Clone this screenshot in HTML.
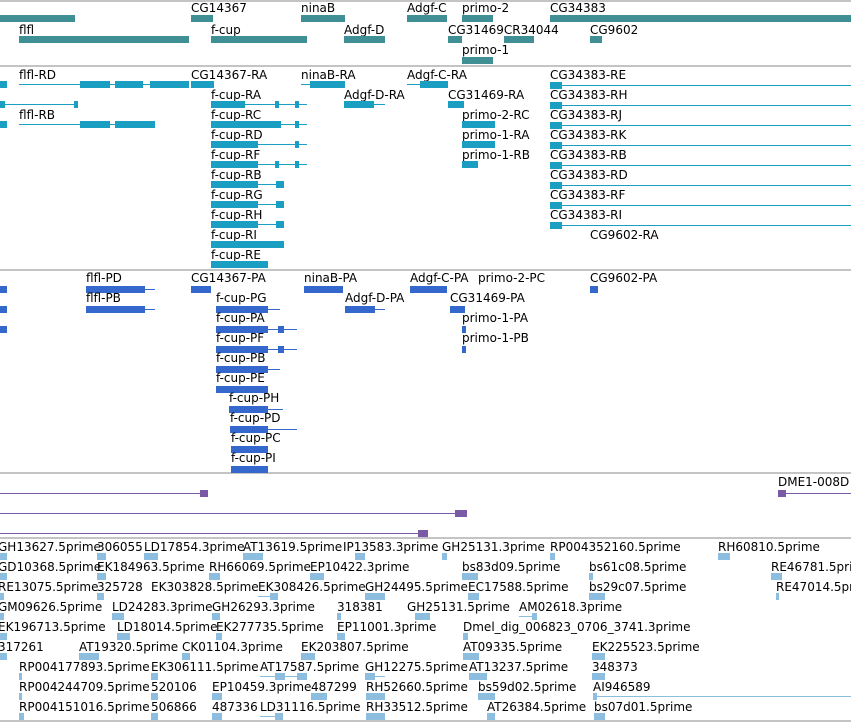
<!DOCTYPE html>
<html><head><meta charset="utf-8"><style>
body{margin:0;width:851px;height:722px;overflow:hidden;background:#fff;position:relative;font-family:"DejaVu Sans","Liberation Sans",sans-serif}
.t{position:absolute;font-size:12px;line-height:14px;white-space:nowrap;color:#000}
.h{position:absolute;left:0;width:851px;height:2px;background:#c4c4c4}
.b{position:absolute;height:7px}
.l{position:absolute;height:1px}
.g{background:#3f8f94}.c{background:#1a9ec2}.p{background:#3468cc}.v{background:#7a5aa6}.e{background:#8dbee0}
</style></head><body>
<div class="h" style="top:0"></div><div class="h" style="top:65px"></div><div class="h" style="top:269px"></div><div class="h" style="top:472px"></div><div class="h" style="top:537px"></div><div class="h" style="top:720px"></div>

<!-- track 1 genes -->
<div class="t" style="left:191px;top:1px">CG14367</div><div class="t" style="left:301px;top:1px">ninaB</div><div class="t" style="left:407px;top:1px">Adgf-C</div><div class="t" style="left:462px;top:1px">primo-2</div><div class="t" style="left:550px;top:1px">CG34383</div>
<div class="b g" style="left:0;width:75px;top:15px"></div><div class="b g" style="left:191px;width:22px;top:15px"></div><div class="b g" style="left:301px;width:44px;top:15px"></div><div class="b g" style="left:407px;width:40px;top:15px"></div><div class="b g" style="left:462px;width:31px;top:15px"></div><div class="b g" style="left:550px;width:301px;top:15px"></div>
<div class="t" style="left:19px;top:23px">flfl</div><div class="t" style="left:211px;top:23px">f-cup</div><div class="t" style="left:344px;top:23px">Adgf-D</div><div class="t" style="left:448px;top:23px">CG31469CR34044</div><div class="t" style="left:590px;top:23px">CG9602</div>
<div class="b g" style="left:19px;width:170px;top:36px"></div><div class="b g" style="left:211px;width:96px;top:36px"></div><div class="b g" style="left:344px;width:41px;top:36px"></div><div class="b g" style="left:448px;width:14px;top:36px"></div><div class="b g" style="left:504px;width:30px;top:36px"></div><div class="b g" style="left:590px;width:12px;top:36px"></div>
<div class="t" style="left:462px;top:43px">primo-1</div><div class="b g" style="left:462px;width:31px;top:57px"></div>

<!-- track 2 transcripts -->
<div class="t" style="left:19px;top:68px">flfl-RD</div><div class="t" style="left:191px;top:68px">CG14367-RA</div><div class="t" style="left:301px;top:68px">ninaB-RA</div><div class="t" style="left:407px;top:68px">Adgf-C-RA</div>
<div class="b c" style="left:0;width:7px;top:81px"></div><div class="l c" style="left:19px;width:170px;top:84px"></div><div class="b c" style="left:80px;width:30px;top:81px"></div><div class="b c" style="left:115px;width:28px;top:81px"></div><div class="b c" style="left:150px;width:39px;top:81px"></div><div class="b c" style="left:191px;width:23px;top:81px"></div><div class="l c" style="left:301px;width:44px;top:84px"></div><div class="b c" style="left:310px;width:35px;top:81px"></div><div class="l c" style="left:407px;width:41px;top:84px"></div><div class="b c" style="left:420px;width:28px;top:81px"></div>
<div class="b c" style="left:0;width:5px;top:101px"></div><div class="l c" style="left:0;width:78px;top:104px"></div><div class="b c" style="left:74px;width:4px;top:101px"></div>
<div class="t" style="left:211px;top:88px">f-cup-RA</div><div class="t" style="left:344px;top:88px">Adgf-D-RA</div><div class="t" style="left:448px;top:88px">CG31469-RA</div>
<div class="l c" style="left:211px;width:96px;top:104px"></div><div class="b c" style="left:211px;width:34px;top:101px"></div><div class="b c" style="left:275px;width:4px;top:101px"></div><div class="b c" style="left:295px;width:4px;top:101px"></div><div class="l c" style="left:344px;width:41px;top:104px"></div><div class="b c" style="left:344px;width:30px;top:101px"></div><div class="b c" style="left:448px;width:16px;top:101px"></div>
<div class="t" style="left:19px;top:108px">flfl-RB</div><div class="t" style="left:211px;top:108px">f-cup-RC</div><div class="t" style="left:462px;top:108px">primo-2-RC</div>
<div class="b c" style="left:0;width:7px;top:121px"></div><div class="l c" style="left:19px;width:136px;top:124px"></div><div class="b c" style="left:80px;width:30px;top:121px"></div><div class="b c" style="left:115px;width:40px;top:121px"></div><div class="l c" style="left:211px;width:96px;top:124px"></div><div class="b c" style="left:211px;width:70px;top:121px"></div><div class="b c" style="left:295px;width:4px;top:121px"></div><div class="b c" style="left:462px;width:33px;top:121px"></div>
<div class="t" style="left:211px;top:128px">f-cup-RD</div><div class="t" style="left:462px;top:128px">primo-1-RA</div>
<div class="l c" style="left:211px;width:96px;top:144px"></div><div class="b c" style="left:211px;width:47px;top:141px"></div><div class="b c" style="left:295px;width:4px;top:141px"></div><div class="b c" style="left:462px;width:33px;top:141px"></div>
<div class="t" style="left:211px;top:148px">f-cup-RF</div><div class="t" style="left:462px;top:148px">primo-1-RB</div>
<div class="l c" style="left:211px;width:96px;top:164px"></div><div class="b c" style="left:211px;width:47px;top:161px"></div><div class="b c" style="left:275px;width:4px;top:161px"></div><div class="b c" style="left:295px;width:4px;top:161px"></div><div class="b c" style="left:462px;width:16px;top:161px"></div>
<div class="t" style="left:211px;top:168px">f-cup-RB</div><div class="l c" style="left:211px;width:73px;top:184px"></div><div class="b c" style="left:211px;width:47px;top:181px"></div><div class="b c" style="left:276px;width:8px;top:181px"></div>
<div class="t" style="left:211px;top:188px">f-cup-RG</div><div class="l c" style="left:211px;width:73px;top:204px"></div><div class="b c" style="left:211px;width:47px;top:201px"></div><div class="b c" style="left:276px;width:8px;top:201px"></div>
<div class="t" style="left:211px;top:208px">f-cup-RH</div><div class="l c" style="left:211px;width:73px;top:224px"></div><div class="b c" style="left:211px;width:47px;top:221px"></div><div class="b c" style="left:276px;width:8px;top:221px"></div>
<div class="t" style="left:211px;top:228px">f-cup-RI</div><div class="b c" style="left:211px;width:73px;top:241px"></div>
<div class="t" style="left:211px;top:248px">f-cup-RE</div><div class="b c" style="left:211px;width:57px;top:261px"></div>
<div class="t" style="left:550px;top:68px">CG34383-RE</div><div class="t" style="left:550px;top:88px">CG34383-RH</div><div class="t" style="left:550px;top:108px">CG34383-RJ</div><div class="t" style="left:550px;top:128px">CG34383-RK</div><div class="t" style="left:550px;top:148px">CG34383-RB</div><div class="t" style="left:550px;top:168px">CG34383-RD</div><div class="t" style="left:550px;top:188px">CG34383-RF</div><div class="t" style="left:550px;top:208px">CG34383-RI</div><div class="t" style="left:590px;top:228px">CG9602-RA</div>
<div class="l c" style="left:550px;width:301px;top:85px"></div><div class="b c" style="left:550px;width:12px;top:82px"></div>
<div class="l c" style="left:550px;width:301px;top:105px"></div><div class="b c" style="left:550px;width:12px;top:102px"></div>
<div class="l c" style="left:550px;width:301px;top:125px"></div><div class="b c" style="left:550px;width:12px;top:122px"></div>
<div class="l c" style="left:550px;width:301px;top:145px"></div><div class="b c" style="left:550px;width:12px;top:142px"></div>
<div class="l c" style="left:550px;width:301px;top:165px"></div><div class="b c" style="left:550px;width:12px;top:162px"></div>
<div class="l c" style="left:550px;width:301px;top:185px"></div><div class="b c" style="left:550px;width:12px;top:182px"></div>
<div class="l c" style="left:550px;width:301px;top:205px"></div><div class="b c" style="left:550px;width:12px;top:202px"></div>
<div class="l c" style="left:550px;width:301px;top:225px"></div><div class="b c" style="left:550px;width:12px;top:222px"></div>

<!-- track 3 proteins -->
<div class="t" style="left:86px;top:271px">flfl-PD</div><div class="t" style="left:191px;top:271px">CG14367-PA</div><div class="t" style="left:304px;top:271px">ninaB-PA</div><div class="t" style="left:410px;top:271px">Adgf-C-PA</div><div class="t" style="left:478px;top:271px">primo-2-PC</div><div class="t" style="left:590px;top:271px">CG9602-PA</div>
<div class="b p" style="left:0;width:7px;top:286px"></div><div class="l p" style="left:86px;width:69px;top:289px"></div><div class="b p" style="left:86px;width:59px;top:286px"></div><div class="b p" style="left:191px;width:20px;top:286px"></div><div class="b p" style="left:304px;width:39px;top:286px"></div><div class="b p" style="left:410px;width:37px;top:286px"></div><div class="b p" style="left:590px;width:8px;top:286px"></div>
<div class="t" style="left:86px;top:291px">flfl-PB</div><div class="t" style="left:216px;top:291px">f-cup-PG</div><div class="t" style="left:345px;top:291px">Adgf-D-PA</div><div class="t" style="left:450px;top:291px">CG31469-PA</div>
<div class="b p" style="left:0;width:7px;top:306px"></div><div class="l p" style="left:86px;width:69px;top:309px"></div><div class="b p" style="left:86px;width:59px;top:306px"></div><div class="l p" style="left:216px;width:64px;top:309px"></div><div class="b p" style="left:216px;width:52px;top:306px"></div><div class="l p" style="left:345px;width:40px;top:309px"></div><div class="b p" style="left:345px;width:30px;top:306px"></div><div class="b p" style="left:450px;width:15px;top:306px"></div>
<div class="t" style="left:216px;top:311px">f-cup-PA</div><div class="t" style="left:462px;top:311px">primo-1-PA</div>
<div class="b p" style="left:0;width:7px;top:326px"></div><div class="l p" style="left:216px;width:81px;top:329px"></div><div class="b p" style="left:216px;width:52px;top:326px"></div><div class="b p" style="left:278px;width:6px;top:326px"></div><div class="b p" style="left:462px;width:4px;top:326px"></div>
<div class="t" style="left:216px;top:331px">f-cup-PF</div><div class="t" style="left:462px;top:331px">primo-1-PB</div>
<div class="l p" style="left:216px;width:81px;top:349px"></div><div class="b p" style="left:216px;width:52px;top:346px"></div><div class="b p" style="left:278px;width:6px;top:346px"></div><div class="b p" style="left:462px;width:4px;top:346px"></div>
<div class="t" style="left:216px;top:351px">f-cup-PB</div><div class="l p" style="left:216px;width:64px;top:369px"></div><div class="b p" style="left:216px;width:52px;top:366px"></div>
<div class="t" style="left:216px;top:371px">f-cup-PE</div><div class="b p" style="left:216px;width:52px;top:386px"></div>
<div class="t" style="left:229px;top:391px">f-cup-PH</div><div class="l p" style="left:229px;width:54px;top:409px"></div><div class="b p" style="left:229px;width:39px;top:406px"></div>
<div class="t" style="left:230px;top:411px">f-cup-PD</div><div class="l p" style="left:230px;width:67px;top:429px"></div><div class="b p" style="left:230px;width:38px;top:426px"></div>
<div class="t" style="left:231px;top:431px">f-cup-PC</div><div class="b p" style="left:231px;width:37px;top:446px"></div>
<div class="t" style="left:231px;top:451px">f-cup-PI</div><div class="b p" style="left:231px;width:37px;top:466px"></div>

<!-- track 4 -->
<div class="l v" style="left:0;width:207px;top:493px"></div><div class="b v" style="left:200px;width:8px;top:490px"></div>
<div class="l v" style="left:0;width:467px;top:513px"></div><div class="b v" style="left:455px;width:12px;top:510px"></div>
<div class="l v" style="left:0;width:428px;top:533px"></div><div class="b v" style="left:418px;width:10px;top:530px"></div>
<div class="t" style="left:778px;top:475px">DME1-008D</div><div class="l v" style="left:778px;width:73px;top:493px"></div><div class="b v" style="left:778px;width:8px;top:490px"></div>

<!-- track 5 ESTs -->
<div class="t" style="left:-2px;top:540px">GH13627.5prime</div><div class="t" style="left:97px;top:540px">306055</div><div class="t" style="left:144px;top:540px">LD17854.3prime</div><div class="t" style="left:243px;top:540px">AT13619.5prime</div><div class="t" style="left:343px;top:540px">IP13583.3prime</div><div class="t" style="left:442px;top:540px">GH25131.3prime</div><div class="t" style="left:550px;top:540px">RP004352160.5prime</div><div class="t" style="left:718px;top:540px">RH60810.5prime</div>
<div class="b e" style="left:0;width:7px;top:553px"></div><div class="b e" style="left:97px;width:9px;top:553px"></div><div class="b e" style="left:144px;width:14px;top:553px"></div><div class="b e" style="left:243px;width:20px;top:553px"></div><div class="b e" style="left:355px;width:10px;top:553px"></div><div class="b e" style="left:442px;width:5px;top:553px"></div><div class="b e" style="left:550px;width:5px;top:553px"></div><div class="b e" style="left:718px;width:12px;top:553px"></div>
<div class="t" style="left:-2px;top:560px">GD10368.5prime</div><div class="t" style="left:97px;top:560px">EK184963.5prime</div><div class="t" style="left:209px;top:560px">RH66069.5prime</div><div class="t" style="left:310px;top:560px">EP10422.3prime</div><div class="t" style="left:462px;top:560px">bs83d09.5prime</div><div class="t" style="left:589px;top:560px">bs61c08.5prime</div><div class="t" style="left:771px;top:560px">RE46781.5prime</div>
<div class="b e" style="left:0;width:7px;top:573px"></div><div class="b e" style="left:97px;width:9px;top:573px"></div><div class="b e" style="left:209px;width:11px;top:573px"></div><div class="b e" style="left:310px;width:14px;top:573px"></div><div class="b e" style="left:462px;width:16px;top:573px"></div><div class="b e" style="left:589px;width:4px;top:573px"></div><div class="b e" style="left:771px;width:11px;top:573px"></div>
<div class="t" style="left:-2px;top:580px">RE13075.5prime</div><div class="t" style="left:97px;top:580px">325728</div><div class="t" style="left:151px;top:580px">EK303828.5prime</div><div class="t" style="left:258px;top:580px">EK308426.5prime</div><div class="t" style="left:365px;top:580px">GH24495.5prime</div><div class="t" style="left:468px;top:580px">EC17588.5prime</div><div class="t" style="left:589px;top:580px">bs29c07.5prime</div><div class="t" style="left:776px;top:580px">RE47014.5prime</div>
<div class="b e" style="left:0;width:4px;top:593px"></div><div class="b e" style="left:97px;width:7px;top:593px"></div><div class="l e" style="left:258px;width:20px;top:596px"></div><div class="b e" style="left:270px;width:8px;top:593px"></div><div class="b e" style="left:365px;width:20px;top:593px"></div><div class="b e" style="left:468px;width:11px;top:593px"></div><div class="b e" style="left:589px;width:16px;top:593px"></div><div class="b e" style="left:776px;width:3px;top:593px"></div>
<div class="t" style="left:-2px;top:600px">GM09626.5prime</div><div class="t" style="left:112px;top:600px">LD24283.3prime</div><div class="t" style="left:212px;top:600px">GH26293.3prime</div><div class="t" style="left:337px;top:600px">318381</div><div class="t" style="left:407px;top:600px">GH25131.5prime</div><div class="t" style="left:519px;top:600px">AM02618.3prime</div>
<div class="b e" style="left:0;width:4px;top:613px"></div><div class="b e" style="left:112px;width:12px;top:613px"></div><div class="b e" style="left:212px;width:8px;top:613px"></div><div class="b e" style="left:337px;width:4px;top:613px"></div><div class="b e" style="left:415px;width:15px;top:613px"></div><div class="l e" style="left:519px;width:18px;top:616px"></div><div class="b e" style="left:532px;width:5px;top:613px"></div>
<div class="t" style="left:-2px;top:620px">EK196713.5prime</div><div class="t" style="left:117px;top:620px">LD18014.5prime</div><div class="t" style="left:216px;top:620px">EK277735.5prime</div><div class="t" style="left:337px;top:620px">EP11001.3prime</div><div class="t" style="left:463px;top:620px">Dmel_dig_006823_0706_3741.3prime</div>
<div class="b e" style="left:0;width:7px;top:633px"></div><div class="b e" style="left:117px;width:13px;top:633px"></div><div class="b e" style="left:216px;width:6px;top:633px"></div><div class="b e" style="left:337px;width:8px;top:633px"></div><div class="b e" style="left:463px;width:5px;top:633px"></div>
<div class="t" style="left:-2px;top:640px">317261</div><div class="t" style="left:79px;top:640px">AT19320.5prime</div><div class="t" style="left:182px;top:640px">CK01104.3prime</div><div class="t" style="left:301px;top:640px">EK203807.5prime</div><div class="t" style="left:463px;top:640px">AT09335.5prime</div><div class="t" style="left:592px;top:640px">EK225523.5prime</div>
<div class="b e" style="left:0;width:7px;top:653px"></div><div class="b e" style="left:79px;width:20px;top:653px"></div><div class="b e" style="left:182px;width:8px;top:653px"></div><div class="b e" style="left:301px;width:14px;top:653px"></div><div class="b e" style="left:463px;width:16px;top:653px"></div><div class="b e" style="left:592px;width:13px;top:653px"></div>
<div class="t" style="left:19px;top:660px">RP004177893.5prime</div><div class="t" style="left:151px;top:660px">EK306111.5prime</div><div class="t" style="left:260px;top:660px">AT17587.5prime</div><div class="t" style="left:365px;top:660px">GH12275.5prime</div><div class="t" style="left:469px;top:660px">AT13237.5prime</div><div class="t" style="left:592px;top:660px">348373</div>
<div class="b e" style="left:19px;width:3px;top:673px"></div><div class="b e" style="left:151px;width:7px;top:673px"></div><div class="l e" style="left:260px;width:47px;top:676px"></div><div class="b e" style="left:275px;width:10px;top:673px"></div><div class="b e" style="left:297px;width:10px;top:673px"></div><div class="l e" style="left:365px;width:20px;top:676px"></div><div class="b e" style="left:365px;width:10px;top:673px"></div><div class="b e" style="left:469px;width:18px;top:673px"></div><div class="b e" style="left:592px;width:13px;top:673px"></div>
<div class="t" style="left:19px;top:680px">RP004244709.5prime</div><div class="t" style="left:151px;top:680px">520106</div><div class="t" style="left:212px;top:680px">EP10459.3prime</div><div class="t" style="left:311px;top:680px">487299</div><div class="t" style="left:366px;top:680px">RH52660.5prime</div><div class="t" style="left:478px;top:680px">bs59d02.5prime</div><div class="t" style="left:593px;top:680px">AI946589</div>
<div class="b e" style="left:19px;width:3px;top:693px"></div><div class="b e" style="left:151px;width:7px;top:693px"></div><div class="b e" style="left:212px;width:10px;top:693px"></div><div class="b e" style="left:311px;width:16px;top:693px"></div><div class="b e" style="left:366px;width:19px;top:693px"></div><div class="b e" style="left:478px;width:17px;top:693px"></div><div class="l e" style="left:593px;width:258px;top:696px"></div><div class="b e" style="left:593px;width:4px;top:693px"></div>
<div class="t" style="left:19px;top:700px">RP004151016.5prime</div><div class="t" style="left:151px;top:700px">506866</div><div class="t" style="left:212px;top:700px">487336</div><div class="t" style="left:260px;top:700px">LD31116.5prime</div><div class="t" style="left:366px;top:700px">RH33512.5prime</div><div class="t" style="left:487px;top:700px">AT26384.5prime</div><div class="t" style="left:594px;top:700px">bs07d01.5prime</div>
<div class="b e" style="left:19px;width:5px;top:713px"></div><div class="b e" style="left:151px;width:7px;top:713px"></div><div class="b e" style="left:212px;width:10px;top:713px"></div><div class="l e" style="left:260px;width:23px;top:716px"></div><div class="b e" style="left:275px;width:8px;top:713px"></div><div class="b e" style="left:366px;width:19px;top:713px"></div><div class="b e" style="left:487px;width:8px;top:713px"></div><div class="b e" style="left:594px;width:11px;top:713px"></div>
</body></html>
